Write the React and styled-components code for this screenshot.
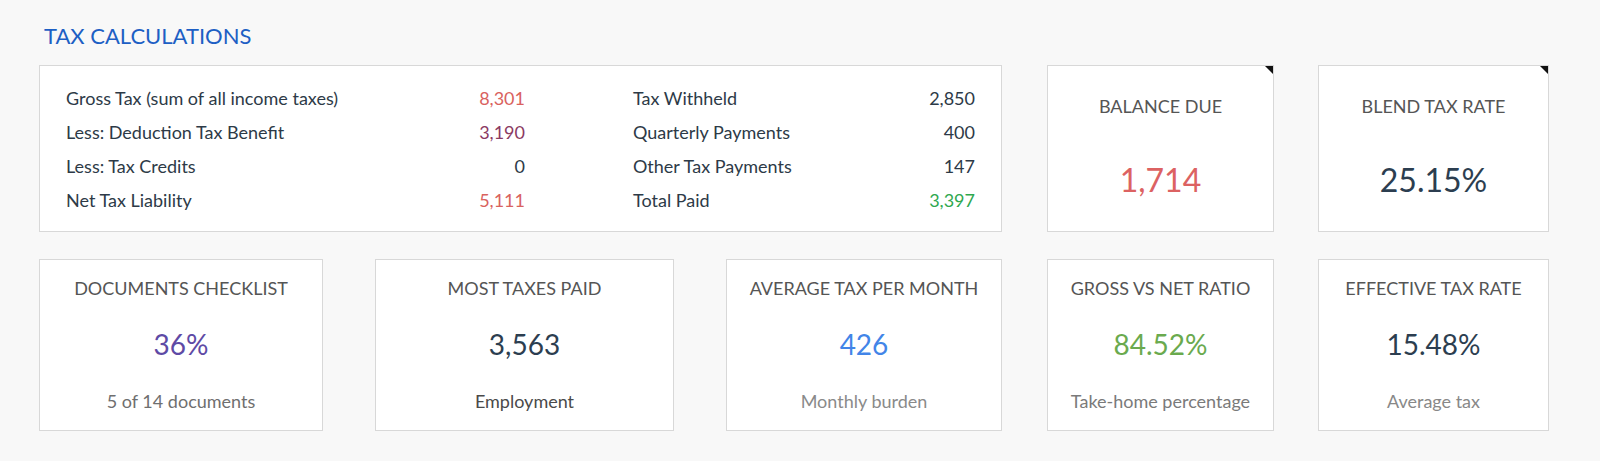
import React from "react";
import styled, { createGlobalStyle } from "styled-components";

const GlobalStyle = createGlobalStyle`
   body {
      margin: 0;
      background: #f8f8f8;
      font-family: Lato, "Open Sans", sans-serif;
   }
`;

const Page = styled.div`
   width: 1510px;
   padding: 24px 0 0 39px;
`;

const Heading = styled.h2`
   margin: 0 0 17px 5px;
   font-size: 22px;
   line-height: 24px;
   font-weight: 400;
   color: #1d5fc4;
   text-transform: uppercase;
`;

const Row = styled.div`
   display: flex;
   gap: 45px;
   margin-bottom: ${(p) => p.$space || 0}px;
`;

const Group = styled.div`
   display: flex;
   gap: ${(p) => p.$gap}px;
   width: ${(p) => p.$width}px;
   justify-content: ${(p) => p.$justify || "flex-start"};
`;

const Box = styled.div`
   position: relative;
   box-sizing: border-box;
   background: #fff;
   border: 1px solid #d8d8d8;
`;

const Summary = styled(Box)`
   width: 963px;
   height: 167px;
   padding: 15px 26px 0 26px;
   display: grid;
   grid-template-columns: 459px 342px;
   column-gap: 108px;
`;

const Lines = styled.div`
   display: flex;
   flex-direction: column;
`;

const Line = styled.div`
   display: flex;
   justify-content: space-between;
   height: 34px;
   line-height: 34px;
   font-size: 18px;
   color: #2d3a47;
`;

const Amount = styled.span`
   color: ${(p) => p.$color || "#2d3a47"};
`;

const Card = styled(Box)`
   width: ${(p) => p.$width}px;
   height: ${(p) => (p.$top ? 167 : 172)}px;
   padding-top: ${(p) => (p.$top ? 30 : 18)}px;
   display: flex;
   flex-direction: column;
   align-items: center;
   text-align: center;
`;

const Corner = styled.span`
   position: absolute;
   top: 0;
   right: 0;
   width: 0;
   height: 0;
   border-top: 8px solid #111;
   border-left: 8px solid transparent;
`;

const Title = styled.div`
   font-size: 18px;
   line-height: 20px;
   color: #555;
   text-transform: uppercase;
`;

const Value = styled.div`
   margin-top: ${(p) => (p.$top ? 44 : 26)}px;
   font-size: ${(p) => (p.$top ? 32 : 28)}px;
   line-height: 40px;
   color: ${(p) => p.$color || "#2c3e50"};
`;

const Note = styled.div`
   margin-top: 27px;
   font-size: 18px;
   line-height: 20px;
   color: ${(p) => p.$color || "#777"};
`;

const leftLines = [
   ["Gross Tax (sum of all income taxes)", "8,301", "#d9625e"],
   ["Less: Deduction Tax Benefit", "3,190", "#8b3a62"],
   ["Less: Tax Credits", "0"],
   ["Net Tax Liability", "5,111", "#d9625e"],
];

const rightLines = [
   ["Tax Withheld", "2,850"],
   ["Quarterly Payments", "400"],
   ["Other Tax Payments", "147"],
   ["Total Paid", "3,397", "#2fa84f"],
];

const bottomLeft = [
   { title: "Documents Checklist", value: "36%", color: "#5e4aa5", note: "5 of 14 documents", noteColor: "#6f6f6f", width: 284 },
   { title: "Most Taxes Paid", value: "3,563", note: "Employment", noteColor: "#4a4a4a", width: 299 },
   { title: "Average Tax per Month", value: "426", color: "#4285e8", note: "Monthly burden", noteColor: "#8a8a8a", width: 276 },
];

const bottomRight = [
   { title: "Gross vs Net Ratio", value: "84.52%", color: "#6aaa4e", note: "Take-home percentage", noteColor: "#7a7a7a", width: 227 },
   { title: "Effective Tax Rate", value: "15.48%", note: "Average tax", noteColor: "#888", width: 231 },
];

function LineList({ items }) {
   return (
      <Lines>
         {items.map(([label, amount, color]) => (
            <Line key={label}>
               <span>{label}</span>
               <Amount $color={color}>{amount}</Amount>
            </Line>
         ))}
      </Lines>
   );
}

function StatCard({ item }) {
   return (
      <Card $width={item.width}>
         <Title>{item.title}</Title>
         <Value $color={item.color}>{item.value}</Value>
         <Note $color={item.noteColor}>{item.note}</Note>
      </Card>
   );
}

export default function App() {
   return (
      <>
         <GlobalStyle />
         <Page>
            <Heading>Tax Calculations</Heading>
            <Row $space={27}>
               <Summary>
                  <LineList items={leftLines} />
                  <LineList items={rightLines} />
               </Summary>
               <Group $gap={44}>
                  <Card $top $width={227}>
                     <Corner />
                     <Title>Balance Due</Title>
                     <Value $top $color="#dc6262">1,714</Value>
                  </Card>
                  <Card $top $width={231}>
                     <Corner />
                     <Title>Blend Tax Rate</Title>
                     <Value $top>25.15%</Value>
                  </Card>
               </Group>
            </Row>
            <Row>
               <Group $width={963} $justify="space-between">
                  {bottomLeft.map((item) => (
                     <StatCard key={item.title} item={item} />
                  ))}
               </Group>
               <Group $gap={44}>
                  {bottomRight.map((item) => (
                     <StatCard key={item.title} item={item} />
                  ))}
               </Group>
            </Row>
         </Page>
      </>
   );
}
